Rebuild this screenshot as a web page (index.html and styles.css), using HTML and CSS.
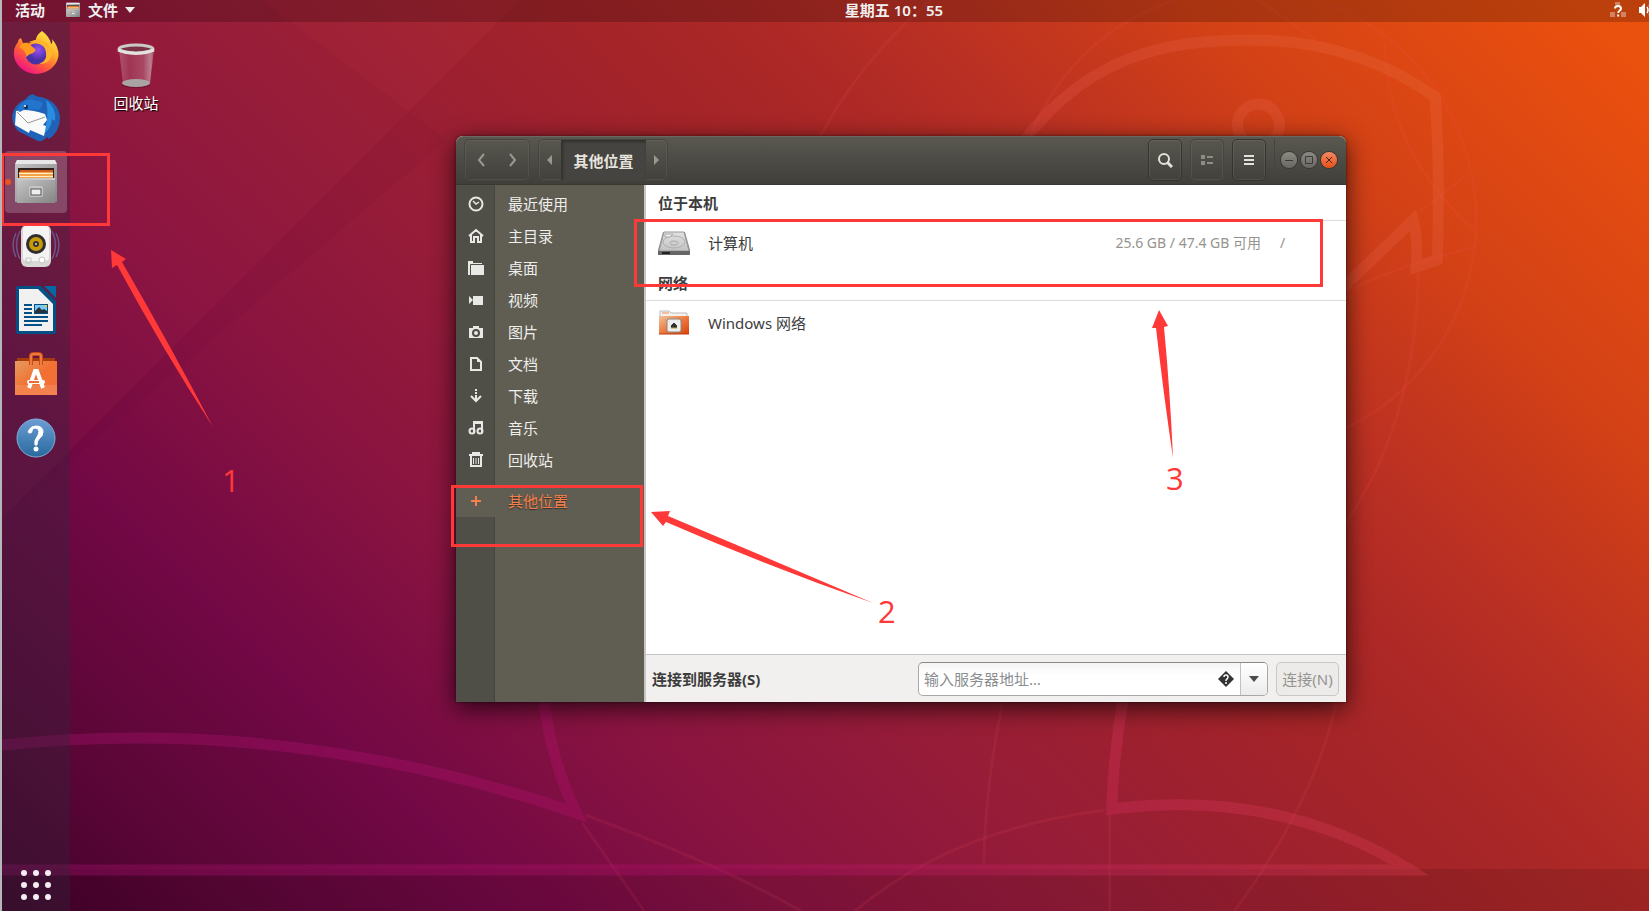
FILE: index.html
```html
<!DOCTYPE html>
<html lang="zh-CN">
<head>
    <meta charset="UTF-8">
    <meta name="viewport" content="width=device-width, initial-scale=1.0">
    <title>其他位置</title>
    <link rel="stylesheet" href="styles.css">
</head>
<body>

    <!-- Wallpaper -->
    <svg class="wallpaper" viewBox="0 0 1649 911" preserveAspectRatio="none" aria-hidden="true">
        <defs>
            <linearGradient id="beaver" gradientUnits="userSpaceOnUse" x1="0" y1="911" x2="1280" y2="-369">
                <stop offset="0" stop-color="#a0106c" stop-opacity=".38"/>
                <stop offset=".3" stop-color="#b01068" stop-opacity=".38"/>
                <stop offset=".5" stop-color="#d03055" stop-opacity=".38"/>
                <stop offset=".7" stop-color="#e05048" stop-opacity=".3"/>
                <stop offset="1" stop-color="#f07838" stop-opacity=".3"/>
            </linearGradient>
        </defs>
        <path d="M0 0H519L70 449L0 519z" fill="#ff5060" opacity=".06"/>
        <path d="M0 0H260L445 140L0 519z" fill="#500030" opacity=".06"/>
        <path d="M0 869H1649V911H0z" fill="#000" opacity=".1"/>
        <g fill="none" stroke="#ff5a60" stroke-opacity=".1" stroke-width="3">
            <circle cx="1245" cy="220" r="231"/>
            <path d="M760 300Q800 110 930 0M1258 0L1316 40M1385 43Q1385 150 1474 230"/>
            <path d="M1418 213L1469 173M1349 290Q1400 265 1474 247M1418 270Q1415 500 1250 620"/>
            <path d="M584 815Q720 865 800 911M581 823L643 911"/>
            <path d="M1002 702Q985 780 983 863M1336 702Q1315 800 1234 911"/>
            <path d="M854 911Q950 830 1104 810M1109 813V911"/>
        </g>
        <g fill="none" stroke="url(#beaver)" stroke-width="11">
            <path d="M0 745Q290 715 575 813Q549 760 541 690"/>
            <path d="M0 870H1410Q1280 788 1111 809Q1113 750 1124 690"/>
            <path d="M1010 160C1080 52 1170 40 1252 40Q1355 40 1435 97Q1440 170 1437 260L1416 267Q1418 240 1413 220L1340 290"/>
            <circle cx="1258" cy="125" r="21"/>
        </g>
    </svg>

    <header class="topbar">
        <div class="topbar-left">
            <button>活动</button>
            <button class="app-menu">
                <svg width="16" height="16" viewBox="0 0 48 48"><use href="#files-icon"/></svg>
                文件
                <svg width="10" height="6" viewBox="0 0 10 6"><path d="M0 0h10L5 6z" fill="#eee"/></svg>
            </button>
        </div>
        <button class="clock">星期五 10：55</button>
        <div class="topbar-right">
            <svg width="16" height="16" viewBox="0 0 16 16">
                <path d="M5 0h5v3H5zM0 10h5v5H0zM11 10h5v5h-5z" fill="#fff" opacity=".35"/>
                <path d="M5 6.500Q5 4 8 4t3 2.500Q11 8 9.200 9 8.200 9.600 8.200 11M8.200 12.500v2" fill="none" stroke="#fff" stroke-width="2"/>
            </svg>
            <svg width="16" height="16" viewBox="0 0 16 16">
                <path d="M1 5h2l4-4v14l-4-4H1z" fill="#fff"/>
                <path d="M9 5q2 3 0 6M11 3q4 5 0 10" fill="none" stroke="#fff" stroke-width="1.500"/>
            </svg>
        </div>
    </header>

    <div class="workspace">
        <nav class="dock">
            <button aria-label="Firefox">
                <svg width="48" height="48" viewBox="0 0 48 48">
                    <defs>
                        <linearGradient id="fox" x1="1" y1="0" x2=".3" y2="1">
                            <stop offset=".1" stop-color="#fff04a"/><stop offset=".4" stop-color="#ffb02a"/>
                            <stop offset=".7" stop-color="#ff5a3a"/><stop offset="1" stop-color="#f0108a"/>
                        </linearGradient>
                        <radialGradient id="globe" cx=".6" cy=".3"><stop offset="0" stop-color="#9a50f5"/><stop offset="1" stop-color="#4a30a5"/></radialGradient>
                    </defs>
                    <path d="M30 1Q38 7 39 14Q41 13 40 9Q47 17 46.500 26A22.500 21 0 0 1 2 26Q1 18 6 12Q6 9 9 8L11 13L16 14Q22 10 24 10Q24 5 30 1z" fill="url(#fox)"/>
                    <circle cx="24" cy="24" r="10.500" fill="url(#globe)"/>
                    <path d="M7 17Q10 12 16 13L23 19Q25 20 21 23Q17 24 14 27Q14 20 7 17z" fill="#ff9a1f"/>
                    <path d="M14 13Q20 11 26 13Q34 15 34 23Q36 31 27 34Q40 34 40 22Q38 15 33 12L26 9z" fill="#ffb52d"/>
                </svg>
            </button>
            <button aria-label="Thunderbird">
                <svg width="48" height="48" viewBox="0 0 48 48">
                    <path d="M21 0Q24 3 29 3Q46 7 48 23Q48 38 37 45L35 43Q31 48 26 47L6 37Q0 30 0 22Q2 10 14 5Q16 1 21 0z" fill="#1f62b8"/>
                    <path d="M34 6Q45 14 43 27L40 25Q39 36 31 40Q38 24 34 6z" fill="#2b8de0"/>
                    <path d="M4 17Q15 14 33 20L35 26L31 31L34 32L32 42L18 36L17 39L3 31z" fill="#fafafa"/>
                    <path d="M5 18L16 29L33 23" fill="none" stroke="#999" stroke-width="1"/>
                    <path d="M5 16Q10 6 19 5Q23 7 30 8Q31 15 25 16Q14 13 8 18z" fill="#2374cc"/>
                    <circle cx="14" cy="13" r="2" fill="#0a2a50"/><circle cx="13" cy="12" r="1" fill="#fff"/>
                </svg>
            </button>
            <button class="running" aria-label="文件">
                <svg width="48" height="48" viewBox="0 0 48 48">
                    <defs>
                        <linearGradient id="metal" x2="1" y2="1"><stop offset="0" stop-color="#c5c5c5"/><stop offset="1" stop-color="#858585"/></linearGradient>
                        <g id="files-icon">
                            <path d="M5 2h38l2 5v37H3V7z" fill="url(#metal)"/>
                            <path d="M5 2h38l2 4H3z" fill="#e8e8e8"/>
                            <path d="M6 10h36v11H6z" fill="#2e211b"/>
                            <path d="M8 12h33v8H7z" fill="#d06020"/><path d="M7 14h34v6H7z" fill="#f6a24a"/><path d="M7 15h34v1H7zM8 18h33v1H8z" fill="#fff1c9"/>
                            <path d="M5 21h38v24H5z" fill="url(#metal)"/><path d="M5 20h38v2H5z" fill="#c8c8c8"/>
                            <rect x="17" y="28" width="14" height="11" rx="2" fill="#c5c5c5"/>
                            <rect x="19" y="31" width="10" height="6" fill="#eee" stroke="#555"/>
                        </g>
                    </defs>
                    <use href="#files-icon"/>
                </svg>
            </button>
            <button aria-label="Rhythmbox">
                <svg width="48" height="48" viewBox="0 0 48 48">
                    <path d="M8 9q-7 14 0 28M4 11q-6 12 0 24M40 9q7 14 0 28M44 11q6 12 0 24" fill="none" stroke="#6f8fd0" stroke-width="1.500" opacity=".5"/>
                    <rect x="9" y="3" width="30" height="42" rx="6" fill="#d8d8d4"/>
                    <rect x="11" y="4" width="26" height="35" rx="4" fill="#f4f4f2"/>
                    <circle cx="24" cy="22" r="10" fill="#2f2f31"/><circle cx="24" cy="22" r="7" fill="#c79b06"/><circle cx="24" cy="22" r="3" fill="#333"/><circle cx="24" cy="22" r="1" fill="#ddd"/>
                    <path d="M14 36h5v5h-5z" fill="none" stroke="#c5c5c5"/><circle cx="30" cy="38" r="3" fill="#fff" stroke="#c5c5c5"/>
                </svg>
            </button>
            <button aria-label="LibreOffice Writer">
                <svg width="48" height="48" viewBox="0 0 48 48">
                    <path d="M6 0h23l15 15v31q0 2-2 2H6q-2 0-2-2V2q0-2 2-2z" fill="#045085"/>
                    <path d="M32 0h12v12z" fill="#0369a3"/>
                    <path d="M7 3h19l15 15v27H7z" fill="#f1f1f1"/>
                    <path d="M12 19h8M12 23h8M12 27h8M12 31h24M12 35h24M12 39h18" stroke="#045085" stroke-width="2"/>
                    <path d="M22 18h14v10H22z" fill="#045085"/><path d="M23 19h12v8H23z" fill="#7bc9f5"/><path d="M23 27v-2l4-4 3 3 2-1 3 2v2z" fill="#283038"/><path d="M32 19h3v3z" fill="#edcf31"/>
                </svg>
            </button>
            <button aria-label="Ubuntu 软件">
                <svg width="48" height="48" viewBox="0 0 48 48">
                    <defs><linearGradient id="bag" x2="1" y2="1"><stop offset="0" stop-color="#e79b61"/><stop offset=".5" stop-color="#f17031"/><stop offset="1" stop-color="#f2703a"/></linearGradient></defs>
                    <path d="M5 8h38v4H5z" fill="#a63c0c"/>
                    <path d="M3 11h42v34H3z" fill="url(#bag)"/><path d="M3 35h42v10H3z" fill="#fff" opacity=".12"/>
                    <path d="M19 15V6q0-2 3-2h4q3 0 3 2v9" fill="none" stroke="#c94a12" stroke-width="4"/>
                    <path d="M19 15V6q0-2 3-2h4q3 0 3 2v9" fill="none" stroke="#ef7a42" stroke-width="2"/>
                    <path d="M17 38l6-17h2l6 17" fill="none" stroke="#fff" stroke-width="4"/>
                    <rect x="15" y="30" width="18" height="4" rx="2" fill="#fff"/><path d="M17 31h10v2H17z" fill="#ef6a32"/>
                </svg>
            </button>
            <button aria-label="帮助">
                <svg width="48" height="48" viewBox="0 0 48 48">
                    <defs><linearGradient id="help" x2="0" y2="1"><stop offset="0" stop-color="#6c9dd5"/><stop offset="1" stop-color="#286a9d"/></linearGradient></defs>
                    <circle cx="24" cy="24" r="19" fill="url(#help)" stroke="#83aeda"/>
                    <path d="M18 19Q15 19 17 16Q19 12 24 12Q31 12 31 18Q31 22 27 25Q25 27 25 31H23Q22 26 25 23Q27 20 27 17Q26 14 23 14Q20 14 20 17Q20 19 18 19z" fill="#fff" stroke="#fff"/>
                    <circle cx="24" cy="35" r="2.500" fill="#fff"/>
                </svg>
            </button>
            <button class="show-apps" aria-label="显示应用程序">
                <svg width="30" height="30" viewBox="0 0 30 30" fill="#f5eef2">
                    <circle cx="3" cy="3" r="3"/><circle cx="15" cy="3" r="3"/><circle cx="27" cy="3" r="3"/>
                    <circle cx="3" cy="15" r="3"/><circle cx="15" cy="15" r="3"/><circle cx="27" cy="15" r="3"/>
                    <circle cx="3" cy="27" r="3"/><circle cx="15" cy="27" r="3"/><circle cx="27" cy="27" r="3"/>
                </svg>
            </button>
        </nav>

        <button class="desktop-icon">
            <svg width="48" height="48" viewBox="0 0 48 48">
                <defs><linearGradient id="bin"><stop offset="0" stop-color="#fff" stop-opacity=".25"/><stop offset=".3" stop-color="#fff" stop-opacity=".12"/><stop offset=".7" stop-color="#fff" stop-opacity=".2"/><stop offset=".9" stop-color="#ddd" stop-opacity=".5"/><stop offset="1" stop-color="#fff" stop-opacity=".2"/></linearGradient></defs>
                <ellipse cx="24" cy="44" rx="14" ry="3" fill="#000" opacity=".25"/>
                <path d="M7 9l4 33q13 5 27 0l4-33z" fill="url(#bin)"/>
                <ellipse cx="24" cy="42" rx="14" ry="4" fill="#a9a3a3"/>
                <ellipse cx="24" cy="8" rx="17" ry="4" fill="#7a3045" stroke="#c9c9c5" stroke-width="3"/>
                <path d="M6 9q18 7 36 0" fill="none" stroke="#e2e2de" stroke-width="3"/>
            </svg>
            回收站
        </button>
    </div>

    <!-- Files window -->
    <main class="window">
        <header class="titlebar">
            <div class="btn-group">
                <button aria-label="后退"><svg width="8" height="14" viewBox="0 0 8 14"><path d="M7 1L2 7l5 6" fill="none" stroke="#9a988f" stroke-width="2"/></svg></button>
                <button aria-label="前进"><svg width="8" height="14" viewBox="0 0 8 14"><path d="M1 1l5 6-5 6" fill="none" stroke="#9a988f" stroke-width="2"/></svg></button>
            </div>
            <div class="btn-group pathbar">
                <button aria-label="上一级"><svg width="5" height="10" viewBox="0 0 5 10"><path d="M5 0v10L0 5z" fill="#9a988f"/></svg></button>
                <button class="current">其他位置</button>
                <button aria-label="下一级"><svg width="5" height="10" viewBox="0 0 5 10"><path d="M0 0v10l5-5z" fill="#9a988f"/></svg></button>
            </div>
            <div class="tools">
                <button aria-label="搜索"><svg width="16" height="16" viewBox="0 0 16 16"><circle cx="7" cy="7" r="5" fill="none" stroke="#e3e1da" stroke-width="2"/><path d="M10 10l5 5" stroke="#e3e1da" stroke-width="3"/></svg></button>
                <button class="disabled" disabled aria-label="列表视图"><svg width="14" height="12" viewBox="0 0 14 12"><path d="M1 1h4v4H1zM7 2h6v2H7zM1 7h4v4H1zM7 8h6v2H7z" fill="#8e8c85"/></svg></button>
                <button aria-label="菜单"><svg width="12" height="12" viewBox="0 0 12 12"><path d="M1 1h10v2H1zM1 5h10v2H1zM1 9h10v2H1z" fill="#e3e1da"/></svg></button>
            </div>
            <div class="window-controls">
                <button aria-label="最小化"><svg width="16" height="16" viewBox="0 0 16 16"><path d="M4 8.500h8" stroke="#3a3935"/></svg></button>
                <button aria-label="最大化"><svg width="16" height="16" viewBox="0 0 16 16"><path d="M4.500 4.500h7v7h-7z" fill="none" stroke="#3a3935"/></svg></button>
                <button class="close" aria-label="关闭"><svg width="16" height="16" viewBox="0 0 16 16"><path d="M5 5l6 6M11 5l-6 6" stroke="#4a2010"/></svg></button>
            </div>
        </header>

        <div class="window-body">
            <nav class="sidebar">
                <a href="#"><svg viewBox="0 0 16 16"><circle cx="8" cy="8" r="6.500" fill="none" stroke="#e8e8e5" stroke-width="2"/><path d="M5 5l3 3 3-2" fill="none" stroke="#e8e8e5" stroke-width="1.500"/></svg><span>最近使用</span></a>
                <a href="#"><svg viewBox="0 0 16 16"><path d="M1 8l7-6 7 6M3 7v7h3V9h4v5h3V7" fill="none" stroke="#e8e8e5" stroke-width="2"/></svg><span>主目录</span></a>
                <a href="#"><svg viewBox="0 0 16 16"><path d="M0 1h5v2h9v1H3v11H0zM3 5h13v10H3z" fill="#e8e8e5"/><path d="M2.500 15V4.500H14" fill="none" stroke="#504f47"/></svg><span>桌面</span></a>
                <a href="#"><svg viewBox="0 0 16 16"><path d="M5 4h10v9H5zM1 4l4 4-4 4z" fill="#e8e8e5"/></svg><span>视频</span></a>
                <a href="#"><svg viewBox="0 0 16 16"><path d="M1 4h4V2h6v2h4v10H1z" fill="#e8e8e5"/><circle cx="8" cy="9" r="3" fill="none" stroke="#504f47" stroke-width="2"/></svg><span>图片</span></a>
                <a href="#"><svg viewBox="0 0 16 16"><path d="M3 2h6l4 4v8H3z" fill="none" stroke="#e8e8e5" stroke-width="2"/><path d="M9 2v4h4z" fill="#e8e8e5"/></svg><span>文档</span></a>
                <a href="#"><svg viewBox="0 0 16 16"><path d="M7 1h2v2H7zM7 4h2v2H7zM7 7h2v5H7z" fill="#e8e8e5"/><path d="M3 8l5 5 5-5" fill="none" stroke="#e8e8e5" stroke-width="2"/></svg><span>下载</span></a>
                <a href="#"><svg viewBox="0 0 16 16"><path d="M6 12V2h8v10" fill="none" stroke="#e8e8e5" stroke-width="2"/><path d="M6 2h8v2H6z" fill="#e8e8e5"/><circle cx="4" cy="11" r="2.500" fill="none" stroke="#e8e8e5" stroke-width="2"/><circle cx="12" cy="11" r="2.500" fill="none" stroke="#e8e8e5" stroke-width="2"/></svg><span>音乐</span></a>
                <a href="#"><svg viewBox="0 0 16 16"><path d="M1 3h14M4 1h8M3 4v10h10V4" fill="none" stroke="#e8e8e5" stroke-width="2"/><path d="M5.500 6v6M8 6v6M10.500 6v6" stroke="#e8e8e5"/></svg><span>回收站</span></a>
                <a href="#" class="active"><svg viewBox="0 0 16 16"><path d="M8 3v10M3 8h10" stroke="#f5804d" stroke-width="2"/></svg><span>其他位置</span></a>
            </nav>

            <section class="content">
                <h2>位于本机</h2>
                <a href="#" class="place">
                    <svg width="32" height="32" viewBox="0 0 32 32">
                        <defs><linearGradient id="disk" x2="0" y2="1"><stop offset="0" stop-color="#e2e2e2"/><stop offset="1" stop-color="#c2c2c2"/></linearGradient></defs>
                        <path d="M5 5h22l5 18v4q0 1-1 1H1q-1 0-1-1v-4z" fill="#8a8a8a"/>
                        <path d="M6 5h20l5 19H1z" fill="url(#disk)" stroke="#999"/>
                        <path d="M0 24h32v3q0 1-1 1H1q-1 0-1-1z" fill="#666"/><path d="M4 25h8v2H4z" fill="#222"/>
                        <ellipse cx="16" cy="15" rx="11" ry="6" fill="none" stroke="#b0b0b0"/><ellipse cx="16" cy="16" rx="4" ry="2" fill="#d0d0d0" stroke="#aaa"/>
                        <path d="M7 7h8l-3 3H7z" fill="#eee" stroke="#aaa"/>
                    </svg>
                    <span>计算机</span>
                    <small>25.6 GB / 47.4 GB 可用</small>
                    <small class="mount">/</small>
                </a>
                <h2>网络</h2>
                <a href="#" class="place">
                    <svg width="32" height="32" viewBox="0 0 32 32">
                        <defs><linearGradient id="net" x2="1" y2="1"><stop offset="0" stop-color="#eec39a"/><stop offset=".5" stop-color="#ec7a40"/><stop offset="1" stop-color="#d9420b"/></linearGradient></defs>
                        <path d="M2 10V4h9l2 2h16v5z" fill="#f5f2ee" stroke="#bbb"/><path d="M4 6h7" stroke="#ee9058"/>
                        <path d="M1 9h30v18H1z" fill="url(#net)"/><path d="M1 27h30" stroke="#b83a0d"/>
                        <rect x="9" y="12" width="14" height="13" rx="2" fill="#eee" stroke="#888"/>
                        <path d="M13 21v-3h1v-1h1v-1h2v1h1v1h1v3z" fill="#333"/><path d="M13 21h6" stroke="#a8a030"/>
                    </svg>
                    <span>Windows 网络</span>
                </a>
                <form class="connect" onsubmit="return false">
                    <label for="server">连接到服务器(S)</label>
                    <div class="address">
                        <input type="text" id="server" placeholder="输入服务器地址…">
                        <svg width="16" height="16" viewBox="0 0 16 16"><path d="M8 0l8 8-8 8-8-8z" fill="#333"/><path d="M6 6q0-2 2-2t2 2q0 1-1 2-1 .5-1 2M8 11v2" fill="none" stroke="#fff" stroke-width="1.500"/></svg>
                        <button type="button" aria-label="最近的服务器"><svg width="10" height="6" viewBox="0 0 10 6"><path d="M0 0h10L5 6z" fill="#4a4a4a"/></svg></button>
                    </div>
                    <button class="connect-btn" disabled>连接(N)</button>
                </form>
            </section>
        </div>
    </main>

    <!-- Numbered steps drawn over the desktop -->
    <svg class="steps" width="1649" height="911" viewBox="0 0 1649 911">
        <g fill="none" stroke="#ff3838" stroke-width="3">
            <rect x="2.500" y="154.500" width="106" height="70"/>
            <rect x="452.500" y="486.500" width="189" height="59"/>
            <rect x="635.500" y="220.500" width="686" height="65"/>
        </g>
        <g fill="#ff3838">
            <path d="M111 250L126 259L122 262Q170 345 213 427Q163 350 117 265L112 268z"/>
            <path d="M651 512L670 511L668 516Q770 559 873 603Q765 565 666 522L663 526z"/>
            <path d="M1159 310L1168 326L1164 327Q1170 390 1173 458Q1163 390 1156 328L1152 328z"/>
            <text x="222" y="492">1</text>
            <text x="878" y="623">2</text>
            <text x="1166" y="490">3</text>
        </g>
    </svg>

</body>
</html>
```

FILE: styles.css
```css
* {
    box-sizing: border-box;
}
body {
    margin: 0;
    min-height: 100vh;
    display: flex;
    flex-direction: column;
    overflow: hidden;
    position: relative;
    border-left: 2px solid #b4b8b8;
    font-family: "Noto Sans", "Noto Sans CJK SC", sans-serif;
    font-size: 15px;
    line-height: 20px;
    color: #3c3c3c;
    background: linear-gradient(45deg, #430029 0%, #5a0636 9%, #720845 20%, #8a1440 32%, #961c38 43%, #a42428 58%, #ae2926 65%, #ba3023 71%, #d34116 82%, #ea500e 97%);
}
button, input {
    font: inherit;
    color: inherit;
    background: none;
    border: none;
    padding: 0;
    margin: 0;
}
a {
    color: inherit;
    text-decoration: none;
}
svg {
    display: block;
    flex-shrink: 0;
}

/* wallpaper */
.wallpaper {
    position: absolute;
    top: 0;
    left: 0;
    width: 100%;
    height: 100%;
}

/* top panel */
.topbar {
    position: relative;
    display: grid;
    grid-template-columns: 1194fr auto 1000fr;
    align-items: center;
    height: 22px;
    padding-bottom: 4px;
    background: rgba(0, 0, 0, 0.2);
    color: #f0f0f0;
    font-weight: 600;
    overflow: hidden;
}
.topbar-left, .topbar-right {
    display: flex;
    align-items: center;
}
.topbar-left {
    gap: 20px;
    padding-left: 13px;
}
.topbar-right {
    justify-content: flex-end;
    gap: 12px;
    margin-right: -5px;
}
.app-menu {
    display: flex;
    align-items: center;
    gap: 7px;
}
.clock {
    font-family: "Noto Sans", "Noto Sans CJK TC", sans-serif;
}

/* dock and desktop */
.workspace {
    position: relative;
    flex: 1;
    display: flex;
    align-items: flex-start;
}
.dock {
    align-self: stretch;
    width: 68px;
    display: flex;
    flex-direction: column;
    align-items: center;
    gap: 2px;
    padding-top: 1px;
    background: rgba(50, 40, 60, 0.35);
}
.dock button {
    width: 62px;
    height: 62px;
    display: flex;
    align-items: center;
    justify-content: center;
}
.dock .running {
    position: relative;
    border-radius: 4px;
    background: rgba(255, 255, 255, 0.2);
}
.running::before {
    content: "";
    position: absolute;
    left: 0;
    width: 6px;
    height: 6px;
    border-radius: 50%;
    background: #e95420;
}
.dock .show-apps {
    height: 52px;
    margin-top: auto;
}
.desktop-icon {
    margin: 19px 0 0 30px;
    width: 72px;
    display: flex;
    flex-direction: column;
    align-items: center;
    gap: 4px;
    color: #fff;
    text-shadow: 1px 1px 1px #000;
}

/* file manager window */
.window {
    position: absolute;
    left: 454px;
    top: 136px;
    width: 890px;
    min-height: 566px;
    display: flex;
    flex-direction: column;
    border-radius: 7px 7px 0 0;
    background: #fff;
    box-shadow: 0 6px 24px rgba(0, 0, 0, 0.7), 0 0 3px rgba(0, 0, 0, 0.5);
}
.titlebar {
    display: flex;
    align-items: center;
    height: 49px;
    padding: 0 9px 1px 8px;
    border-radius: 7px 7px 0 0;
    border-top: 1px solid #6b6860;
    border-bottom: 1px solid #383732;
    background: linear-gradient(#595750, #403f3a);
}
.btn-group {
    display: flex;
    width: 66px;
    height: 42px;
    border: 1px solid #45443e;
    border-radius: 5px;
    box-shadow: inset 0 0 0 1px rgba(255, 255, 255, 0.06);
}
.btn-group button {
    flex: 1;
    display: flex;
    align-items: center;
    justify-content: center;
}
.pathbar {
    width: 130px;
    margin-left: 8px;
}
.pathbar .current {
    flex: 0 0 85px;
    padding-top: 2px;
    color: #e6e3dc;
    font-weight: bold;
    background: #454440;
    border-left: 1px solid #35342f;
    box-shadow: inset 1px 2px 3px rgba(0, 0, 0, 0.3);
}
.tools {
    display: flex;
    gap: 8px;
    margin-left: auto;
    padding-right: 8px;
    border-right: 1px solid #45443e;
}
.tools button {
    width: 34px;
    height: 42px;
    display: flex;
    align-items: center;
    justify-content: center;
    border: 1px solid #35342f;
    border-radius: 5px;
    box-shadow: inset 0 0 0 1px rgba(255, 255, 255, 0.07);
}
.tools .disabled {
    border-color: #45443e;
}
.window-controls {
    display: flex;
    gap: 4px;
    margin-left: 6px;
}
.window-controls button {
    width: 16px;
    height: 16px;
    border-radius: 50%;
    background: linear-gradient(#8c8a83, #696761);
    box-shadow: 0 0 0 1px #383732;
}
.window-controls .close {
    background: linear-gradient(#f58863, #e65018);
}
.window-body {
    flex: 1;
    display: flex;
}

.sidebar {
    width: 190px;
    padding-top: 3px;
    color: #eeeeec;
    background: linear-gradient(90deg, #504f47 38px, #45443d 38px, #45443d 39px, #605d52 39px);
    border-right: 2px solid #c8c5c2;
}
.sidebar a {
    display: flex;
    align-items: center;
    gap: 24px;
    height: 32px;
    padding-left: 12px;
}
.sidebar svg {
    width: 16px;
    height: 16px;
}
.sidebar .active {
    margin-top: 9px;
    color: #f5804d;
    background: #605d52;
    text-shadow: 0 1px 1px rgba(0, 0, 0, 0.5);
}

.content {
    flex: 1;
    display: flex;
    flex-direction: column;
}
.content h2 {
    height: 36px;
    margin: 0;
    padding: 8px 12px;
    font-size: 15px;
    line-height: 20px;
    border-bottom: 1px solid #dcdcdc;
}
.place {
    display: flex;
    align-items: center;
    height: 44px;
    padding: 0 12px;
}
.place span {
    margin-left: 18px;
}
.place small {
    margin-left: auto;
    font-size: 14px;
    color: #96938e;
}
.place .mount {
    width: 73px;
    margin-left: 0;
    padding-left: 19px;
}

.connect {
    display: flex;
    align-items: center;
    gap: 8px;
    height: 48px;
    margin-top: auto;
    padding: 0 7px 0 6px;
    border-top: 1px solid #c6c4c2;
    background: #f1f0ee;
}
.connect label {
    flex: 1;
    font-weight: bold;
}
.address {
    display: flex;
    align-items: center;
    width: 350px;
    height: 34px;
    border: 1px solid #aaa8a4;
    border-top-color: #8b8985;
    border-radius: 5px;
    background: linear-gradient(#f4f4f4, #fff 12px);
    overflow: hidden;
}
.address input {
    flex: 1;
    min-width: 0;
    height: 32px;
    padding: 0 5px;
}
.address input::placeholder {
    color: #8b8e8f;
    opacity: 1;
}
.address button {
    width: 27px;
    height: 32px;
    margin-left: 6px;
    display: flex;
    align-items: center;
    justify-content: center;
    border-left: 1px solid #c3c1be;
    background: linear-gradient(#fff, #ececec);
}
.connect-btn {
    width: 63px;
    height: 34px;
    border: 1px solid #c9c7c4;
    border-radius: 5px;
    color: #96938f;
    background: #ecebe9;
}

/* step marks */
.steps {
    position: absolute;
    top: 0;
    left: -2px;
    pointer-events: none;
    font-family: "Open Sans", "Noto Sans CJK SC", sans-serif;
    font-size: 31px;
}
```
